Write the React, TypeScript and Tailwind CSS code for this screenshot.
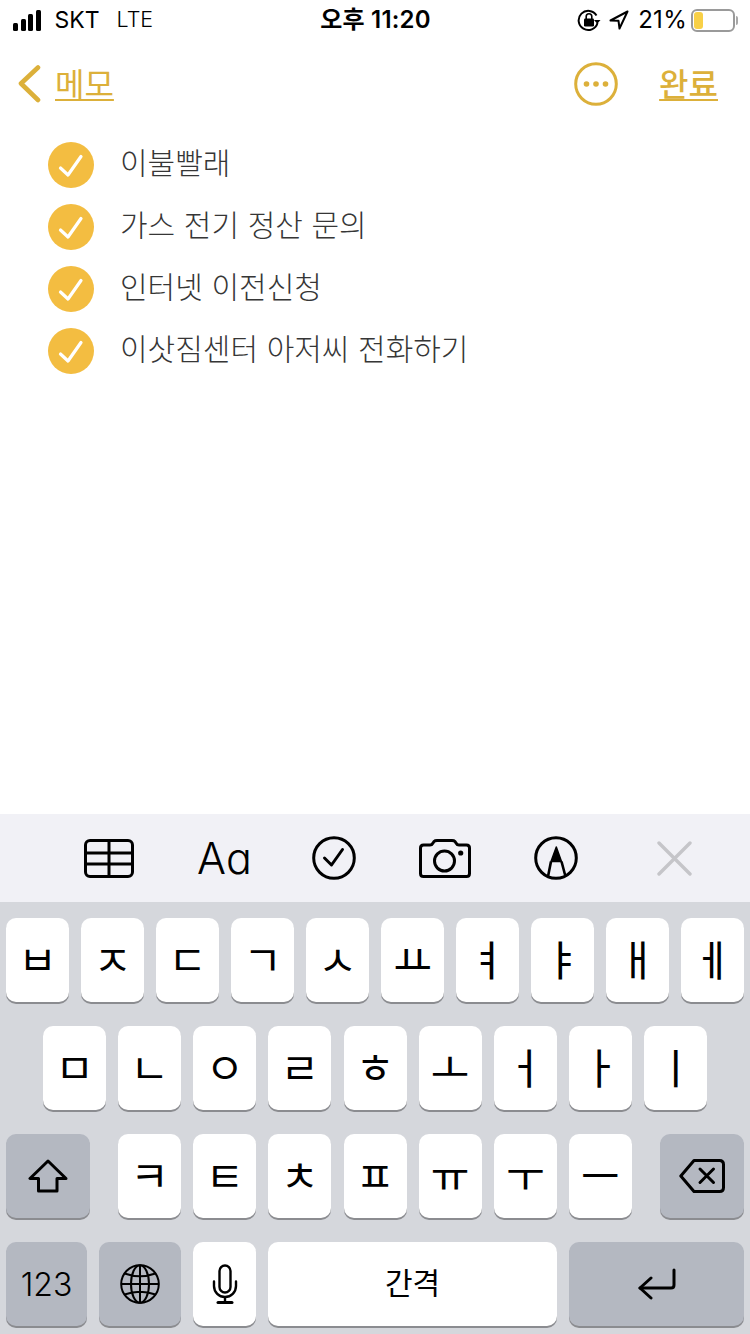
const row1 = ['ㅂ', 'ㅈ', 'ㄷ', 'ㄱ', 'ㅅ', 'ㅛ', 'ㅕ', 'ㅑ', 'ㅐ', 'ㅔ'];
const row2 = ['ㅁ', 'ㄴ', 'ㅇ', 'ㄹ', 'ㅎ', 'ㅗ', 'ㅓ', 'ㅏ', 'ㅣ'];
const row3 = ['ㅋ', 'ㅌ', 'ㅊ', 'ㅍ', 'ㅠ', 'ㅜ', 'ㅡ'];
const todos = ['이불빨래', '가스 전기 정산 문의', '인터넷 이전신청', '이삿짐센터 아저씨 전화하기'];

function Key({ label }: { label: string }) {
  return (
    <div className="flex h-[84px] w-[63px] shrink-0 items-center justify-center rounded-[10px] bg-white pb-[4px] text-[42px] leading-none text-black shadow-[0_2px_0_#8b8c90]">
      {label}
    </div>
  );
}

function GrayKey({ className, children }: { className: string; children: React.ReactNode }) {
  return (
    <div className={`flex h-[84px] shrink-0 items-center justify-center rounded-[10px] bg-[#b4b8c1] shadow-[0_2px_0_#8b8c90] ${className}`}>
      {children}
    </div>
  );
}

function Check() {
  return (
    <div className="flex h-[46px] w-[46px] shrink-0 items-center justify-center rounded-full bg-[#f3bd41]">
      <svg width="46" height="46" viewBox="0 0 46 46" fill="none">
        <path d="M12.5 26 L20 33 L33 14.5" stroke="#fff" strokeWidth="3.2" strokeLinecap="round" strokeLinejoin="round" />
      </svg>
    </div>
  );
}

function StatusBar() {
  return (
    <div className="flex h-[40px] items-center justify-between pl-[13px] pr-[12px] font-['Inter','Noto_Sans_CJK_KR',sans-serif] text-[24px] leading-none text-black">
      <div className="flex flex-1 items-center">
        <div className="flex items-end gap-[2.5px]">
          <div className="h-[8px] w-[5px] rounded-[1.5px] bg-black" />
          <div className="h-[12px] w-[5px] rounded-[1.5px] bg-black" />
          <div className="h-[17px] w-[5px] rounded-[1.5px] bg-black" />
          <div className="h-[21px] w-[5px] rounded-[1.5px] bg-black" />
        </div>
        <span className="ml-[14px] text-[23px]">SKT</span>
        <span className="ml-[17px] text-[21.5px] font-light">LTE</span>
      </div>
      <div className="font-semibold tracking-[0.2px]">오후 11:20</div>
      <div className="flex flex-1 items-center justify-end">
        <svg width="24" height="24" viewBox="0 0 24 24" fill="none">
          <path d="M19.5 7.5 A9.6 9.6 0 1 0 20.5 15" stroke="#000" strokeWidth="2" />
          <path d="M17 12 h6.5 l-3.2 3.8z" fill="#000" />
          <rect x="7" y="10.5" width="10" height="8" rx="1.2" fill="#000" />
          <path d="M9.2 11 V8.6 a2.8 2.8 0 0 1 5.6 0 V11" stroke="#000" strokeWidth="1.6" />
        </svg>
        <svg className="ml-[8px]" width="20" height="20" viewBox="0 0 20 20" fill="none">
          <path d="M18.5 1.5 L1.5 10.5 L9.5 10.8 L10.5 18.5 Z" stroke="#000" strokeWidth="2" strokeLinejoin="round" />
        </svg>
        <span className="ml-[9px] tracking-[0.3px]">21%</span>
        <div className="ml-[4px] flex items-center">
          <div className="flex h-[23px] w-[44px] items-center rounded-[6px] border-2 border-[#9a9a9a] pl-[1px]">
            <div className="h-[17px] w-[9px] rounded-[3px] bg-[#f8d047]" />
          </div>
          <div className="ml-[1px] h-[9px] w-[2px] rounded-r-full bg-[#a8a8a8]" />
        </div>
      </div>
    </div>
  );
}

function NavBar() {
  return (
    <div className="flex h-[88px] items-center pl-[18px] pr-[32px] text-[32px] text-[#dcb03a]">
      <svg width="24" height="38" viewBox="0 0 24 38" fill="none">
        <path d="M20 2.5 L3 18.5 L20 35" stroke="#dcb03a" strokeWidth="4.6" strokeLinecap="round" strokeLinejoin="round" />
      </svg>
      <span className="mb-[5px] ml-[13px] leading-[40px] underline decoration-2 underline-offset-[3px]">메모</span>
      <div className="flex-1" />
      <svg width="44" height="44" viewBox="0 0 44 44" fill="none">
        <circle cx="22" cy="22" r="20.3" stroke="#dcb03a" strokeWidth="3" />
        <circle cx="12.5" cy="22" r="2.8" fill="#dcb03a" />
        <circle cx="22" cy="22" r="2.8" fill="#dcb03a" />
        <circle cx="31.5" cy="22" r="2.8" fill="#dcb03a" />
      </svg>
      <span className="mb-[5px] ml-[41px] font-medium leading-[40px] underline decoration-2 underline-offset-[3px]">완료</span>
    </div>
  );
}

function Toolbar() {
  return (
    <div className="flex h-[88px] items-center bg-[#f1f1f6] pl-[84px]">
      <svg width="50" height="39" viewBox="0 0 50 39" fill="none" stroke="#000" strokeWidth="3">
        <rect x="1.5" y="1.5" width="47" height="36" rx="4.5" />
        <path d="M1.5 14 H48.5 M1.5 25 H48.5 M25 1.5 V37.5" />
      </svg>
      <span className="ml-[63px] w-[53px] font-['Inter',sans-serif] text-[43px] font-light leading-none text-black">Aɑ</span>
      <svg className="ml-[62px]" width="44" height="44" viewBox="0 0 44 44" fill="none" stroke="#000" strokeWidth="3">
        <circle cx="22" cy="22" r="20.3" />
        <path d="M12.5 22 L19.5 29 L30.5 13.5" strokeLinecap="round" strokeLinejoin="round" />
      </svg>
      <svg className="ml-[63px]" width="52" height="39" viewBox="0 0 52 39" fill="none" stroke="#000" strokeWidth="3">
        <path d="M4.5 6 H11 Q13 6 14 4 L15 2.5 Q16 1.5 18 1.5 H33 Q35 1.5 36 2.5 L37 4 Q38 6 40 6 H47.5 Q50.5 6 50.5 9 V34.5 Q50.5 37.5 47.5 37.5 H4.5 Q1.5 37.5 1.5 34.5 V9 Q1.5 6 4.5 6Z" strokeLinejoin="round" />
        <circle cx="25.5" cy="22" r="10" />
        <circle cx="41.7" cy="14" r="2.6" fill="#000" stroke="none" />
      </svg>
      <svg className="ml-[62px]" width="46" height="46" viewBox="0 0 46 46" fill="none" stroke="#000" strokeWidth="3">
        <circle cx="23" cy="23" r="20.3" />
        <path d="M23.3 12 L18 26.5 H28.5 Z" fill="#000" stroke="#000" strokeWidth="1.5" strokeLinejoin="round" />
        <path d="M18 26.5 L15 41.5 M28.5 26.5 L32.5 41.5" strokeWidth="2.6" />
      </svg>
      <svg className="ml-[78px]" width="35" height="35" viewBox="0 0 35 35" fill="none" stroke="#c5c5c9" strokeWidth="3.4" strokeLinecap="round">
        <path d="M2 2 L33 33 M33 2 L2 33" />
      </svg>
    </div>
  );
}

function Keyboard() {
  return (
    <div className="flex h-[432px] flex-col gap-[24px] bg-[#d5d7dc] px-[6px] pt-[16px] font-['Noto_Sans_CJK_KR',sans-serif]">
      <div className="flex justify-between">
        {row1.map((k) => <Key key={k} label={k} />)}
      </div>
      <div className="flex gap-[12.125px] pl-[37px]">
        {row2.map((k) => <Key key={k} label={k} />)}
      </div>
      <div className="flex justify-between">
        <GrayKey className="w-[84px]">
          <svg width="40" height="34" viewBox="0 0 40 34" fill="none">
            <path d="M20 2 L2 19.5 H10.5 V32 H29 V19.5 H38 Z" stroke="#000" strokeWidth="3" strokeLinejoin="round" />
          </svg>
        </GrayKey>
        <div className="flex gap-[12.125px]">
          {row3.map((k) => <Key key={k} label={k} />)}
        </div>
        <GrayKey className="w-[84px]">
          <svg width="46" height="34" viewBox="0 0 46 34" fill="none" stroke="#000" strokeWidth="3">
            <path d="M15 1.5 H40.5 Q44.5 1.5 44.5 5.5 V28.5 Q44.5 32.5 40.5 32.5 H15 L1.8 17 Z" strokeLinejoin="round" />
            <path d="M21 10 L34.5 23.5 M34.5 10 L21 23.5" strokeLinecap="round" />
          </svg>
        </GrayKey>
      </div>
      <div className="flex gap-[12px]">
        <GrayKey className="w-[81px] pt-[1px] font-['Inter',sans-serif] text-[32px] font-light text-black">123</GrayKey>
        <GrayKey className="w-[82px]">
          <svg width="40" height="40" viewBox="0 0 40 40" fill="none" stroke="#000" strokeWidth="2">
            <circle cx="20" cy="20" r="18.8" />
            <ellipse cx="20" cy="20" rx="9" ry="18.8" />
            <path d="M20 1.2 V38.8 M1.2 20 H38.8 M4.5 9.5 Q20 15 35.5 9.5 M4.5 30.5 Q20 25 35.5 30.5" />
          </svg>
        </GrayKey>
        <div className="flex h-[84px] w-[63px] shrink-0 items-center justify-center rounded-[10px] bg-white shadow-[0_2px_0_#8b8c90]">
          <svg width="26" height="40" viewBox="0 0 26 40" fill="none" stroke="#000" strokeWidth="2.4">
            <rect x="7.5" y="1.5" width="11" height="27" rx="5.5" />
            <path d="M2 17.5 V22 A11 11 0 0 0 24 22 V17.5" strokeLinecap="round" />
            <path d="M13 33 V38" />
            <path d="M6 38.5 H20" strokeWidth="3" strokeLinecap="round" />
          </svg>
        </div>
        <div className="flex h-[84px] w-[289px] shrink-0 items-center justify-center rounded-[10px] bg-white pb-[6px] text-[30px] text-black shadow-[0_2px_0_#8b8c90]">
          간격
        </div>
        <GrayKey className="flex-1">
          <svg width="38" height="32" viewBox="0 0 38 32" fill="none" stroke="#000" strokeWidth="3" strokeLinecap="round" strokeLinejoin="round">
            <path d="M36 2 V17 Q36 20 33 20 H2" />
            <path d="M13 10 L2 20 L13 30" />
          </svg>
        </GrayKey>
      </div>
    </div>
  );
}

export default function App() {
  return (
    <div className="flex h-[1334px] w-[750px] flex-col overflow-hidden bg-white font-['Noto_Sans_CJK_KR',sans-serif]">
      <StatusBar />
      <NavBar />
      <div className="flex flex-1 flex-col gap-[16px] pl-[48px] pt-[14px]">
        {todos.map((t) => (
          <div key={t} className="flex h-[46px] items-center">
            <Check />
            <span className="ml-[26px] pb-[9px] text-[30px] font-light leading-none text-[#363636] [word-spacing:2px]">{t}</span>
          </div>
        ))}
      </div>
      <Toolbar />
      <Keyboard />
    </div>
  );
}
